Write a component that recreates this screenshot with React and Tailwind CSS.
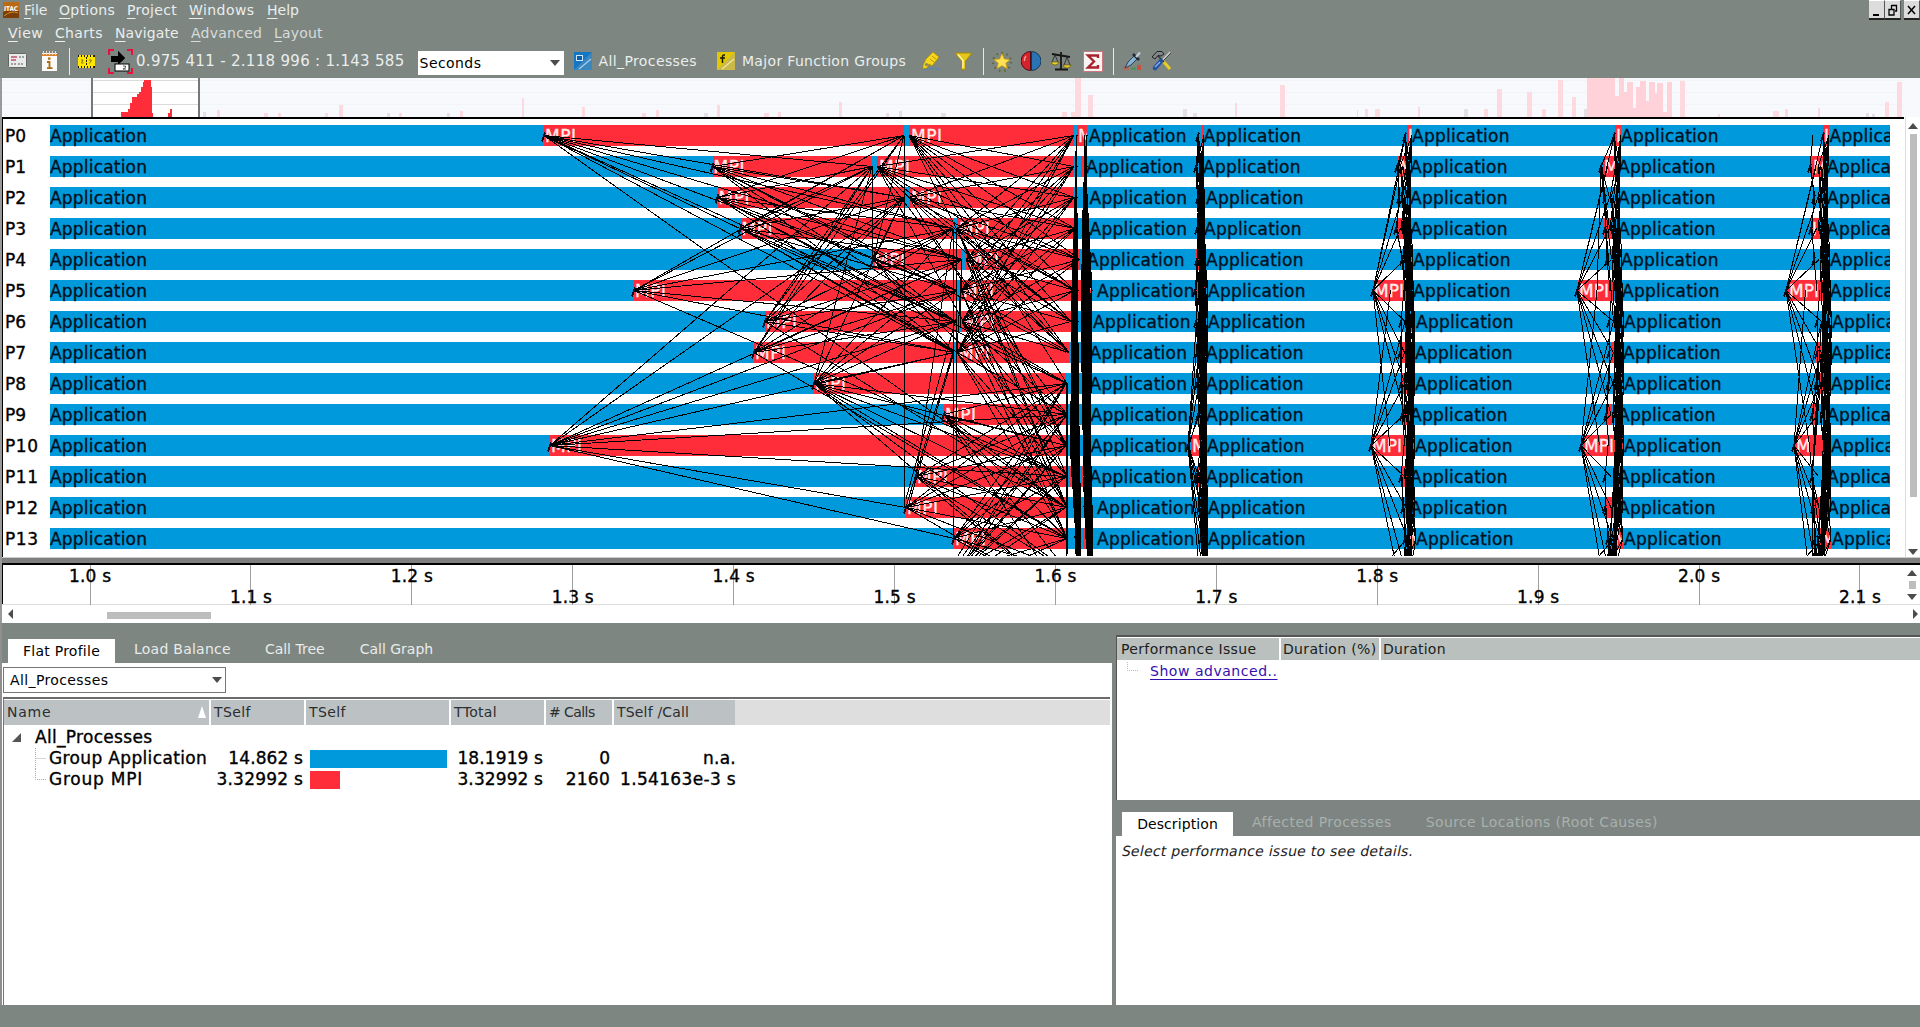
import React, { useLayoutEffect, useRef } from "react";

const BLUE = "#0099dc";
const RED = "#ff2d3a";
const FONT = '"DejaVu Sans", sans-serif';

/* Text stretched by letter spacing to a fixed run width. */
function Fit({ w, className = "", children }) {
  const ref = useRef(null);
  useLayoutEffect(() => {
    const el = ref.current;
    el.style.letterSpacing = "0px";
    const n = el.textContent.length;
    const natural = el.offsetWidth;
    el.style.letterSpacing = (w - natural) / n + "px";
  }, [w]);
  return (
    <span ref={ref} className={"inline-block whitespace-pre leading-none " + className}>
      {children}
    </span>
  );
}

/* ---------- timeline data ---------- */
const rowTop = (k) => 6 + 31 * k;
const rowMid = (k) => 16.5 + 31 * k;
const ROWS = Array.from({ length: 14 }, (_, i) => i);

const s1 = [544, 712.5, 717.5, 740.5, 873, 634, 765, 754, 814, 944, 550, 916, 906, 954, 960, 930];
const e1 = [904, 872, 904, 953, 962, 957, 955, 954];
const s2 = [909, 877, 909, 957, 966, 961, 962, 957];
const e2 = [1074, 1074, 1074, 1075, 1080, 1075, 1071, 1069, 1066, 1067, 1066, 1066, 1066, 1067, 1066, 1066];

const labels = [
  [1089, 1086, 1089.5, 1089.5, 1087, 1097, 1093, 1089.5, 1089.5, 1090.5, 1090.5, 1089.5, 1097, 1097],
  [1203.5, 1203, 1206, 1204, 1206, 1208, 1208, 1206, 1206, 1206, 1207, 1206, 1208, 1208],
  [1412, 1410, 1410, 1410, 1413, 1413, 1416, 1415, 1415, 1410, 1415, 1410, 1410, 1416],
  [1621, 1618, 1618, 1618, 1621, 1622, 1624, 1623, 1624, 1618, 1624, 1618, 1618, 1624],
  [1829.5, 1827, 1827, 1827, 1830, 1830, 1832, 1831, 1831, 1827, 1831, 1827, 1827, 1832],
];

/* [row, x0, x1, label] short MPI stretches of the later iterations */
const shortMpi = [
  [0, 1077, 1087, "M"], [1, 1081, 1085, ""], [5, 1075, 1082, ""], [5, 1085, 1092, "N"],
  [11, 1070, 1074, ""], [11, 1081, 1086, ""], [13, 1083, 1092, ""], [10, 1084, 1088, ""],
  [0, 1202, 1204, ""], [1, 1200, 1204, ""], [5, 1196, 1206, ""], [10, 1191, 1201, "M"],
  [11, 1197, 1204, "I"], [4, 1196, 1200, ""], [8, 1198, 1203, ""],
  [0, 1407, 1412, "I"], [1, 1398, 1407, "M"], [3, 1397, 1406, ""], [5, 1373, 1409, "MPI"],
  [10, 1371, 1414, "MPI"], [13, 1408, 1416, "M"], [7, 1401, 1408, ""], [8, 1401, 1408, ""],
  [9, 1402, 1407, ""], [11, 1402, 1407, ""],
  [0, 1615, 1621, "I"], [1, 1603, 1616, "M"], [3, 1604, 1612, ""], [5, 1578, 1614, "MPI"],
  [10, 1583, 1623, "MPI"], [13, 1613, 1623, "M"], [7, 1611, 1618, ""], [9, 1606, 1612, ""],
  [12, 1606, 1617, ""],
  [0, 1823, 1829, "I"], [1, 1812, 1824, "M"], [3, 1811, 1820, "I"], [5, 1788, 1824, "MPI"],
  [10, 1795, 1830, "M"], [13, 1820, 1831, "M"], [7, 1816, 1822, ""], [9, 1812, 1818, ""],
  [12, 1814, 1824, ""], [8, 1820, 1826, ""],
];

/* senders / receivers of the tight collectives, one x for each process */
const bursts = [
  {
    a: [1076, 1075, 1075, 1074, 1074, 1072, 1071, 1071, 1071, 1071, 1070, 1072, 1074, 1075, 1076, 1077],
    b: [1077, 1077, 1077, 1077, 1077, 1078, 1078, 1078, 1078, 1078, 1079, 1079, 1080, 1081, 1081, 1082],
  },
  {
    a: [1084, 1084, 1083, 1082, 1082, 1081, 1081, 1081, 1082, 1082, 1083, 1083, 1084, 1086, 1088, 1089],
    b: [1087, 1087, 1087, 1087, 1088, 1092, 1091, 1091, 1090, 1090, 1090, 1091, 1092, 1093, 1093, 1094],
  },
  {
    a: [1198, 1196, 1198, 1197, 1197, 1195, 1196, 1197, 1197, 1198, 1188, 1196, 1199, 1201, 1202, 1202],
    b: [1204, 1204, 1205, 1205, 1206, 1208, 1208, 1207, 1207, 1207, 1207, 1207, 1208, 1208, 1208, 1208],
  },
  {
    a: [1405, 1397, 1399, 1396, 1402, 1373, 1401, 1400, 1401, 1402, 1371, 1401, 1403, 1405, 1404, 1405],
    b: [1412, 1410, 1411, 1411, 1413, 1414, 1415, 1415, 1415, 1413, 1415, 1414, 1415, 1416, 1412, 1408],
  },
  {
    a: [1614, 1601, 1605, 1605, 1607, 1577, 1609, 1609, 1608, 1606, 1581, 1605, 1605, 1608, 1607, 1606],
    b: [1621, 1620, 1620, 1620, 1622, 1623, 1624, 1624, 1624, 1622, 1624, 1623, 1623, 1623, 1616, 1613],
  },
  {
    a: [1823, 1810, 1814, 1811, 1814, 1786, 1817, 1817, 1816, 1812, 1794, 1812, 1813, 1815, 1813, 1811],
    b: [1829, 1828, 1828, 1828, 1830, 1831, 1832, 1832, 1831, 1830, 1831, 1831, 1831, 1831, 1825, 1820],
  },
];

function buildMessages() {
  const out = [];
  const add = (x1, r1, x2, r2) => {
    if (x2 - x1 > 3) out.push(`M${x1} ${rowMid(r1)}L${x2} ${rowMid(r2)}`);
  };
  const free = (x1, y1, x2, y2) => out.push(`M${x1} ${y1}L${x2} ${y2}`);
  for (let i = 0; i < 8; i++)
    for (let j = 0; j < 8; j++)
      if (i !== j) {
        add(s1[i], i, e1[j], j);
        add(s2[i], i, e2[j], j);
      }
  // the two groups exchange with each other
  for (let j = 1; j < 8; j++) {
    if (j !== 3) add(s1[10], 10, e1[j], j);
    add(s1[8], 8, e1[j], j);
  }
  add(s1[0], 0, 1066, 12);
  add(s1[0], 0, 1066, 8);
  for (let i = 1; i < 8; i++) add(s1[i], i, 1066, i + 6);
  for (let i = 0; i < 8; i++) {
    add(s2[i], i, 1067, 8 + (i % 6));
    add(s2[i], i, 1067, i % 2 ? 12 : 10);
  }
  for (let i = 8; i < 16; i++)
    for (let j = 8; j < 16; j++) if (i !== j && i !== 10) add(s1[i], i, e2[j], j);
  [[1066, 8], [1066, 9], [1066, 11], [906, 12], [954, 13]].forEach(([x, r]) => add(s1[10], 10, x, r));
  for (let i = 9; i < 14; i += 2) for (let j = 6; j < 8; j++) add(s2[j], j, 1067, i);
  // almost instantaneous messages
  free(904.5, 17, 904.5, 388);
  free(872, 47, 872, 140);
  free(953.5, 110, 953.5, 420);
  free(956.5, 110, 956.5, 340);
  free(962, 140, 960, 210);
  free(962, 140, 957, 233);
  free(953, 233, 906, 388);
  free(954, 233, 908, 388);
  free(956, 200, 906, 380);
  free(953, 110, 916, 357);
  free(1066, 264, 1066, 437);
  free(1068, 264, 1067, 437);
  bursts.forEach(({ a, b }, n) => {
    for (let i = 0; i < 16; i++)
      for (let j = 0; j < 16; j++) {
        const d = Math.abs(i - j);
        if (!d) continue;
        const far = b[i] - a[i] > 18;
        if (n < 2 ? d < 12 : far ? d < 6 : d < 5 || d === 8) {
          const tx = far ? (a[j] + b[j]) / 2 - 3 : b[j];
          free(far ? a[i] : n < 2 ? a[i] : Math.max(a[i], b[i] - 10 + (j % 4)), rowMid(i), tx, rowMid(j));
          if (!far && d === 1) free(a[i], rowMid(i), a[j] + 2 > a[i] + 14 ? a[i] + 3 : a[i] + (a[j] - a[i] < -12 ? 2 : a[j] - a[i]) + 1, rowMid(j));
        }
      }
    if (n > 2) free(b[13] - 9, rowMid(13), b[13] - 24, 437);
  });
  return out.join("");
}
const MESSAGES = buildMessages();

function Bar({ x0, x1, row, fill }) {
  return <rect x={x0} y={rowTop(row)} width={x1 - x0} height="21" fill={fill} />;
}

function Timeline() {
  const dark = { fill: "#00101c", stroke: "#00101c", strokeWidth: 0.35 };
  const light = { fill: "#ffecec", stroke: "#ffecec", strokeWidth: 0.35 };
  return (
    <svg width="1901" height="438" viewBox="3 0 1901 438" className="block shrink-0" shapeRendering="crispEdges" fontFamily={FONT} fontSize="17">
      <defs>
        <clipPath id="plot"><rect x="0" y="0" width="1890" height="437" /></clipPath>
        {shortMpi.map(([r, a, b], i) => (
          <clipPath id={"m" + i} key={i}><rect x={a} y={rowTop(r)} width={b - a} height="21" /></clipPath>
        ))}
      </defs>
      {ROWS.map((r) => (
        <g key={r}>
          <text x="5" y={rowMid(r) + 6} fill="#000" stroke="#000" strokeWidth=".35" textLength={r > 9 ? 33 : 21}>P{r}</text>
          <Bar x0={50} x1={1890} row={r} fill={BLUE} />
          <Bar x0={s1[r]} x1={r < 8 ? e1[r] : e2[r]} row={r} fill={RED} />
          {r < 8 && <Bar x0={s2[r]} x1={e2[r]} row={r} fill={RED} />}
        </g>
      ))}
      {shortMpi.map(([r, a, b], i) => <Bar key={i} x0={a} x1={b} row={r} fill={RED} />)}
      <g clipPath="url(#plot)">
        {ROWS.map((r) => (
          <g key={r}>
            <text x="50" y={rowMid(r) + 6} {...dark} textLength="97">Application</text>
            {labels.map((l, i) => (
              <text key={i} x={l[r]} y={rowMid(r) + 6} {...dark} textLength="97.500">Application</text>
            ))}
            <text x={s1[r] + 1} y={rowMid(r) + 6} {...light} textLength="31">MPI</text>
            {r < 8 && <text x={s2[r] + 2} y={rowMid(r) + 6} {...light} textLength="31">MPI</text>}
          </g>
        ))}
        {shortMpi.map(([r, a, , t], i) =>
          t ? <g key={i} clipPath={`url(#m${i})`}><text x={a + 1} y={rowMid(r) + 6} {...light}>{t}</text></g> : null
        )}
        <path d={MESSAGES} stroke="#000" strokeWidth="1" fill="none" />
        {ROWS.map((r) => (
          <path key={r} stroke="#001020" strokeWidth="2" fill="none"
            d={[s1[r], ...bursts.slice(2).map((c) => c.a[r])].map((x) => `M${x - 2} ${rowMid(r) + 6}l3 -9`).join("")} />
        ))}
      </g>
    </svg>
  );
}

/* ---------- overview strip: [x, width, height] ---------- */
const faint = [
  [203, 3, 5], [217, 3, 7], [264, 4, 4], [278, 3, 4], [325, 3, 4], [339, 4, 12], [387, 3, 4], [399, 3, 4], [447, 3, 4],
  [460, 3, 6], [522, 2, 19], [582, 3, 10], [642, 4, 4], [656, 3, 7], [704, 4, 4], [717, 3, 12], [764, 5, 4], [778, 3, 5],
  [839, 3, 15], [886, 3, 4], [899, 3, 6], [941, 5, 4], [1062, 5, 5], [1071, 4, 5], [1075, 6, 39], [1088, 5, 22],
  [1183, 4, 8], [1193, 4, 4], [1235, 2, 14], [1280, 5, 32], [1357, 1, 7], [1365, 3, 8], [1375, 5, 8], [1418, 2, 10],
  [1464, 4, 8], [1484, 4, 8], [1497, 5, 28], [1527, 5, 25], [1542, 4, 8], [1558, 5, 37], [1572, 4, 20], [1584, 3, 8],
  [1587, 28, 39], [1615, 4, 21], [1619, 5, 39], [1624, 3, 25], [1627, 6, 35], [1633, 3, 9], [1636, 4, 30],
  [1640, 6, 36], [1646, 3, 16], [1649, 6, 35], [1655, 2, 24], [1657, 6, 34], [1663, 4, 5], [1667, 5, 35],
  [1680, 5, 36], [1718, 2, 3], [1773, 6, 6], [1785, 3, 8], [1818, 2, 9], [1866, 3, 4], [1872, 3, 3], [1885, 4, 15], [1897, 5, 35],
];
const grayish = [203, 387, 447, 704, 886, 899, 941, 1183, 1193, 1357, 1464, 1584, 1866, 1872];

function Overview() {
  return (
    <svg width="1918" height="39" viewBox="2 0 1918 39" className="block" shapeRendering="crispEdges">
      <rect x="2" width="1918" height="39" fill="#f8f9fd" />
      <path d="M2 2.5H1904M2 14.5H1904M2 26.5H1904" stroke="#f3f4f8" />
      {faint.map(([x, w, h], i) => <rect key={i} x={x} y={39 - h} width={w} height={h} fill={grayish.includes(x) ? "#e6e0e6" : x > 1586 && x < 1672 ? "#ffd2d9" : "#fdd9e0"} />)}
      <rect x="92" width="107" height="39" fill="#fff" />
      <path d="M92 2.5H199M92 14.5H199M92 26.5H199" stroke="#dadada" />
      <path d="M121 39V34H128V31H130V25H132V19H137V16H139V14H141V9H143V4H144V2H151V9H152V35H153V39ZM168 39V35H170V31H172V39Z" fill={RED} />
      <path d="M92 0V39M199 0V39" stroke="#777" strokeWidth="2" />
    </svg>
  );
}

/* ---------- time axis ---------- */
function Axis() {
  return (
    <svg width="1901" height="40" viewBox="3 0 1901 40" className="block shrink-0" fontFamily={FONT} fontSize="17">
      {Array.from({ length: 12 }, (_, k) => {
        const x = 89.5 + 160.9 * k;
        return (
          <g key={k}>
            <path d={`M${Math.round(x) + 0.5} 0V40`} stroke="#a0a0a0" />
            <text x={x - 20.5} y={k % 2 ? 38 : 17} textLength="42" fill="#000" stroke="#000" strokeWidth=".35">{(1 + k / 10).toFixed(1)} s</text>
          </g>
        );
      })}
    </svg>
  );
}

function Tri({ dir, className = "" }) {
  const d = { up: "M0 6L5 0L10 6Z", down: "M0 0H10L5 6Z", left: "M5 0V10L0 5Z", right: "M0 0V10L5 5Z" }[dir];
  const v = dir === "up" || dir === "down";
  return <svg width={v ? 10 : 5} height={v ? 6 : 10} className={"block shrink-0 " + className}><path d={d} fill="#4c4c4c" /></svg>;
}

/* ---------- toolbar icons ---------- */
const IconCard = () => (
  <svg width="20" height="18" className="block"><rect x=".5" y="1.5" width="18" height="14" rx="1" fill="#e9eaea" stroke="#666" /><path d="M3 5H9M3 8H8" stroke="#c05068" strokeWidth="1.3" /><path d="M11 5H16M3 12H8M10 12H16" stroke="#888" strokeWidth="1.5" strokeDasharray="2 1" /></svg>
);
const IconInfo = () => (
  <svg width="17" height="21" className="block"><rect x="1" y="2" width="15" height="18" fill="#fafafa" /><rect x="1" y="3" width="15" height="2" fill="#d9822b" /><path d="M2.5 0V4M5.5 0V4M8.5 0V4M11.5 0V4M14.5 0V4" stroke="#f0d8c0" /><path d="M6 11H8.500V17M6 17.200H11.500" stroke="#b06a10" strokeWidth="1.800" fill="none" /><rect x="7" y="6.500" width="2.500" height="2.200" fill="#b06a10" /></svg>
);
const IconFilm = () => (
  <svg width="17" height="13" className="block"><rect width="17" height="13" fill="#1c1a00" /><rect x="0" y="2" width="17" height="9" fill="#ffe600" /><path d="M1 1H16M1 12H16" stroke="#ffe600" strokeWidth="2" strokeDasharray="2 1" /><path d="M8.500 2V11" stroke="#1c1a00" strokeDasharray="2 1" /><path d="M3 5H5L3.500 8H5.500M11 5H13.500L11.500 8.500" stroke="#8a7600" fill="none" /></svg>
);
const IconGoto = () => (
  <svg width="25" height="25" className="block"><path d="M1 6V1H6M19 1H24V6M1 19V24H6M19 24H24V19" fill="none" stroke="#e8103c" strokeWidth="2" /><path d="M3 7H10V2L17 9L10 16V12H3Z" fill="#000" /><rect x="7" y="15" width="14" height="7" fill="#fff" stroke="#000" /><path d="M3 7H10V2L17 9L13 13H3Z" fill="#000" /><path d="M15 17H17.500V18.500L15 20H18" stroke="#333" fill="none" strokeWidth=".8" /></svg>
);
const IconProc = () => (
  <svg width="18" height="18" className="block"><rect width="18" height="18" fill="#1577c4" /><path d="M0 18L18 0V18Z" fill="#3a86bf" /><path d="M5 17L17 7" stroke="#a8cce6" strokeWidth="1.300" /><rect x="2.500" y="3.500" width="6" height="5" fill="#0b5ea8" stroke="#cfe8fa" /></svg>
);
const IconFn = () => (
  <svg width="18" height="18" className="block"><rect width="18" height="18" fill="#e2c800" /><path d="M0 18L18 0V18Z" fill="#cbb84a" /><path d="M5 17L17 7" stroke="#f0e6a0" strokeWidth="1.300" /><path d="M8 3H6.500Q5.500 3 5.500 5V11M3 6H8" stroke="#1a1600" strokeWidth="1.500" fill="none" /></svg>
);
const IconTag = () => (
  <svg width="22" height="21" className="block"><path d="M2 19Q11 16 20 19" stroke="#4f88bd" strokeWidth="1.500" fill="none" strokeDasharray="5 1" /><path d="M12 1L18 6L11 15L8 13L6 17L2 18L2 14L5 8Z" fill="#f7d51c" stroke="#a98a00" strokeWidth=".8" /><circle cx="5.500" cy="13.500" r="1.600" fill="#7e8682" /><path d="M9 8L13 11M11 5L15 8" stroke="#b89600" /></svg>
);
const IconFunnel = () => (
  <svg width="19" height="19" className="block"><path d="M1 1H18L11.500 9V17L7.500 18V9Z" fill="#e6c61c" stroke="#a88c00" /><path d="M4 2.500L9 8.500V16" stroke="#fff6a0" strokeWidth="1.500" fill="none" /></svg>
);
const IconStar = () => (
  <svg width="22" height="21" className="block"><circle cx="11" cy="11" r="9" fill="none" stroke="#58652e" strokeWidth="2" strokeDasharray="1.500 3.700" /><path d="M11 2.500L13.300 8L19 8.500L14.800 12.200L16.200 17.500L11 14.800L5.800 17.500L7.200 12.200L3 8.500L8.700 8Z" fill="#ffe052" stroke="#c79b00" strokeWidth=".7" /></svg>
);
const IconHalf = () => (
  <svg width="20" height="20" className="block"><path d="M9.500 .5A9.300 9.300 0 0 0 9.500 19.500Z" fill="#d6222a" stroke="#4b1013" /><path d="M10.500 .5A9.300 9.300 0 0 1 10.500 19.500Z" fill="#2a74b4" stroke="#16395a" /><path d="M5 5Q3 7 3.500 10" stroke="#ff9a9a" strokeWidth="1.500" fill="none" /></svg>
);
const IconScale = () => (
  <svg width="21" height="20" className="block"><path d="M1 3L19 6M10 1V18M4 18.500H17" stroke="#161616" strokeWidth="1.800" fill="none" /><path d="M4 4L1 11M4 4L7 11M16 6L13 14M16 6L19 14" stroke="#222" strokeWidth=".8" /><path d="M0 11H8Q7 14 4 14T0 11ZM12 14H20Q19 17 16 17T12 14Z" fill="#e7cf2a" stroke="#5a4e00" strokeWidth=".6" /></svg>
);
const IconSigma = () => (
  <svg width="20" height="21" className="block"><rect x=".5" y=".5" width="19" height="20" fill="#f8f4f4" stroke="#c8787e" /><path d="M15 7V4.500H5L11 10.500L5 16.500H15V14" fill="none" stroke="#a8232e" strokeWidth="2.400" /></svg>
);
const IconDrop = () => (
  <svg width="21" height="21" className="block"><rect x="1" y="15" width="6" height="4" fill="#c8604c" opacity=".7" /><rect x="9" y="16" width="5" height="3" fill="#4d9460" /><rect x="15" y="14" width="4" height="5" fill="#c8503f" /><path d="M3 17L6 11L12 5L15 8L9 14Z" fill="#86b3d2" stroke="#2b4258" /><path d="M11 3L17 9" stroke="#1d2a38" strokeWidth="2.500" /><path d="M14 6L18 1.500" stroke="#bfc9ce" strokeWidth="2.500" /></svg>
);
const IconTools = () => (
  <svg width="23" height="22" className="block"><path d="M13 11L20 19" stroke="#e6cf1e" strokeWidth="3" /><path d="M6 4L14 12" stroke="#333" strokeWidth="1.500" /><path d="M20 2L11 12" stroke="#ccc" strokeWidth="1.500" /><path d="M21 3L12 12" stroke="#444" strokeWidth="1" /><path d="M11 11L5 18" stroke="#24519f" strokeWidth="4.500" strokeLinecap="round" /><path d="M10 12L5 17" stroke="#8db8f0" strokeWidth="1.300" /><path d="M2 7L7 1.500H12L14 4L11 6L8 5.500L5 9Z" fill="#80868a" stroke="#222" /></svg>
);

const Menu = ({ items }) =>
  items.map(([t, ml, w]) => (
    <span key={t} className="flex" style={{ marginLeft: ml, width: w }}>
      <Fit w={w} className="text-[14px]"><span className="underline underline-offset-[3px]">{t[0]}</span>{t.slice(1)}</Fit>
    </span>
  ));

const Sep = ({ className }) => <div className={"h-[27px] w-px bg-[#e8e8e8] " + className} />;

function Header() {
  return (
    <header className="h-[78px] bg-[#7e8682] pl-[2px] text-[#eaeeec]">
      <div className="flex h-[22px] items-start">
        <div className="flex grow items-center pt-[2px]">
          <svg width="16" height="16" className="ml-px block"><rect width="16" height="16" fill="#7a3d08" /><path d="M0 10Q8 6 16 9V0H0Z" fill="#b86a14" /><path d="M1 14Q8 8 15 11" stroke="#d88a28" fill="none" /><text x="1" y="8.500" fontSize="6.500" fontWeight="bold" fill="#fff" fontFamily={FONT} textLength="14" lengthAdjust="spacingAndGlyphs">ITAC</text></svg>
          <Menu items={[["File", 5, 23], ["Options", 12, 56], ["Project", 12, 50], ["Windows", 12, 66], ["Help", 12, 32]]} />
        </div>
        <div className="flex text-black">
          <WinBtn><path d="M4 14H10" stroke="#000" strokeWidth="2" /></WinBtn>
          <WinBtn><path d="M6.500 4.500H11.500V10H10M6.500 4V8M4 8.500H9V14H4Z" fill="none" stroke="#000" strokeWidth="1.300" /></WinBtn>
          <div className="w-[3px]" />
          <WinBtn><path d="M4 5L11 13M11 5L4 13" stroke="#000" strokeWidth="1.500" /></WinBtn>
        </div>
      </div>
      <div className="flex h-[22px] items-center">
        <Menu items={[["View", 6, 35], ["Charts", 12, 48], ["Navigate", 12, 64]]} />
        <span className="flex text-[#d6dcd9]"><Menu items={[["Advanced", 12, 71], ["Layout", 12, 49]]} /></span>
      </div>
      <div className="flex h-[34px] items-center">
        <div className="ml-[6px]"><IconCard /></div>
        <div className="ml-[13px]"><IconInfo /></div>
        <Sep className="ml-[11px]" />
        <div className="ml-[8px]"><IconFilm /></div>
        <div className="ml-[13px]"><IconGoto /></div>
        <Fit w={269} className="ml-[3px] text-[15px]">0.975 411 - 2.118 996 : 1.143 585</Fit>
        <div className="ml-[13px] mt-[3px] flex h-[24px] w-[146px] items-center justify-between bg-white pl-[2px] pr-[4px] text-black">
          <Fit w={62} className="text-[14px]">Seconds</Fit>
          <Tri dir="down" />
        </div>
        <div className="ml-[10px]"><IconProc /></div>
        <Fit w={98} className="ml-[7px] text-[14px]">All_Processes</Fit>
        <div className="ml-[20px]"><IconFn /></div>
        <Fit w={164} className="ml-[7px] text-[14px]">Major Function Groups</Fit>
        <div className="ml-[15px]"><IconTag /></div>
        <div className="ml-[11px]"><IconFunnel /></div>
        <Sep className="ml-[10px]" />
        <div className="ml-[7px]"><IconStar /></div>
        <div className="ml-[8px]"><IconHalf /></div>
        <div className="ml-[10px]"><IconScale /></div>
        <div className="ml-[11px]"><IconSigma /></div>
        <Sep className="ml-[10px]" />
        <div className="ml-[8px]"><IconDrop /></div>
        <div className="ml-[7px]"><IconTools /></div>
      </div>
    </header>
  );
}

const WinBtn = ({ children }) => (
  <div className="h-[20px] w-[16px] border-b-2 border-r border-b-[#222] border-r-[#555] border-t border-t-white bg-[#dcdcdc]">
    <svg width="15" height="17" className="block">{children}</svg>
  </div>
);

const TH = ({ w, t, tw, arrow }) => (
  <div className="mr-[2px] flex h-full shrink-0 items-center justify-between bg-[#bcc1c3] pb-[2px] pl-[3px] text-[#2a2e30]" style={{ width: w }}>
    <Fit w={tw} className="text-[14px]">{t}</Fit>
    {arrow && <svg width="8" height="12" className="mr-[3px] block"><path d="M4 0L8 12H0Z" fill="#fff" /></svg>}
  </div>
);

const STRONG = "text-[17px] [-webkit-text-stroke:0.35px_#000]";

const Num = ({ w, tw, children }) => (
  <div className="flex shrink-0 justify-end" style={{ width: w }}><Fit w={tw} className={STRONG}>{children}</Fit></div>
);

function DataRow({ name, nw, last, a, aw, bar, color, b, bw, c, cw, d, dw }) {
  return (
    <div className="flex h-[21px] items-center">
      <svg width="42" height="21" className="block shrink-0"><path d={last ? "M31.500 0V10.500H42" : "M31.500 0V21M31.500 10.500H42"} stroke="#aaa" strokeDasharray="1 1" fill="none" /></svg>
      <div className="w-[162px] shrink-0 pl-[3px]"><Fit w={nw} className={STRONG}>{name}</Fit></div>
      <Num w={95} tw={aw}>{a}</Num>
      <div className="ml-[7px] h-[18px] shrink-0" style={{ width: bar, background: color }} />
      <div className="shrink-0" style={{ width: 145 - bar }} />
      <Num w={88} tw={bw}>{b}</Num>
      <Num w={67} tw={cw}>{c}</Num>
      <Num w={126} tw={dw}>{d}</Num>
    </div>
  );
}

function LeftPane() {
  return (
    <section className="flex w-[1110px] shrink-0 flex-col">
      <div className="flex h-[40px] items-end text-[14px] text-[#e8ecea]">
        <div className="ml-[6px] flex h-[24px] w-[107px] items-center justify-center bg-white text-black"><Fit w={77}>Flat Profile</Fit></div>
        <div className="flex h-[29px] items-center">
          <Fit w={97} className="ml-[19px]">Load Balance</Fit>
          <Fit w={60} className="ml-[34px]">Call Tree</Fit>
          <Fit w={74} className="ml-[35px]">Call Graph</Fit>
        </div>
      </div>
      <div className="flex h-[342px] flex-col bg-white pl-px">
        <div className="mt-[4px] flex h-[26px] w-[223px] items-center justify-between border border-[#777] pl-[6px] pr-[3px] text-black">
          <Fit w={98} className="text-[14px]">All_Processes</Fit>
          <Tri dir="down" />
        </div>
        <div className="mr-[2px] mt-[4px] grow border-l border-t-2 border-l-[#777] border-t-[#6b6b6b] text-black">
          <div className="mt-px flex h-[25px] bg-white">
            <TH w={205} t="Name" tw={44} arrow />
            <TH w={93} t="TSelf" tw={37} />
            <TH w={143} t="TSelf" tw={37} />
            <TH w={93} t="TTotal" tw={43} />
            <TH w={66} t="# Calls" tw={46} />
            <TH w={121} t="TSelf /Call" tw={72} />
            <div className="-ml-[2px] grow bg-[#dedede]" />
          </div>
          <div className="flex h-[23px] items-center pt-px">
            <svg width="9" height="9" className="ml-[8px] block"><path d="M9 0V9H0Z" fill="#555" /></svg>
            <Fit w={117} className={"ml-[14px] " + STRONG}>All_Processes</Fit>
          </div>
          <DataRow name="Group Application" nw={158} a="14.862 s" aw={75} bar={137} color={BLUE} b="18.1919 s" bw={86} c="0" cw={11} d="n.a." dw={33} />
          <DataRow name="Group MPI" nw={94} last a="3.32992 s" aw={87} bar={30} color={RED} b="3.32992 s" bw={86} c="2160" cw={44} d="1.54163e-3 s" dw={116} />
        </div>
      </div>
    </section>
  );
}

function RightPane() {
  return (
    <section className="flex grow flex-col pl-[4px]">
      <div className="mt-[12px] h-[165px] border-l border-t-2 border-l-[#555] border-t-[#555] bg-white pt-px">
        <div className="flex h-[22px] text-[14px] text-[#1c2020]">
          <div className="mr-[2px] flex w-[162px] items-center bg-[#b9c0bd] pl-[4px]"><Fit w={135}>Performance Issue</Fit></div>
          <div className="mr-[2px] flex w-[98px] items-center bg-[#b9c0bd] pl-[2px]"><Fit w={93}>Duration (%)</Fit></div>
          <div className="flex grow items-center bg-[#b9c0bd] pl-[2px]"><Fit w={63}>Duration</Fit></div>
        </div>
        <div className="flex h-[21px] items-center">
          <svg width="33" height="21" className="block"><path d="M10.500 2V10.500H21" stroke="#bbb" strokeDasharray="1 1" fill="none" /></svg>
          <Fit w={128} className="text-[14px] text-[#3410b0] underline underline-offset-[3px]">Show advanced..</Fit>
        </div>
      </div>
      <div className="flex h-[36px] items-end bg-[#7e8482] text-[14px] text-[#a7b1ac]">
        <div className="ml-[6px] flex h-[24px] w-[111px] items-center justify-center bg-white text-black"><Fit w={81}>Description</Fit></div>
        <div className="flex h-[28px] items-center">
          <Fit w={140} className="ml-[19px]">Affected Processes</Fit>
          <Fit w={232} className="ml-[34px]">Source Locations (Root Causes)</Fit>
        </div>
      </div>
      <div className="h-[169px] bg-white pl-[6px] pt-[5px] text-[14px] text-[#222]"><Fit w={292} className="-skew-x-12">Select performance issue to see details.</Fit></div>
    </section>
  );
}

export default function App() {
  return (
    <div className="h-[1027px] w-[1920px] overflow-hidden bg-[#7e8682] font-['DejaVu_Sans',sans-serif]">
      <Header />
      <div className="border-l-2 border-[#999] bg-white">
        <Overview />
        <div className="flex">
          <div className="w-[1902px] border-l border-t-2 border-l-black border-t-black"><Timeline /></div>
          <div className="ml-px flex h-[440px] grow flex-col items-center border-l border-[#ddd] pt-[6px]">
            <Tri dir="up" />
            <div className="mt-[5px] h-[363px] w-[7px] bg-[#bdbdbd]" />
            <Tri dir="down" className="mt-[52px]" />
          </div>
        </div>
        <div className="h-[6px] border-t border-t-[#ccc] bg-[#7f7f7f]" />
        <div className="h-[2px] bg-black" />
        <div className="flex h-[40px] border-b border-[#ddd]">
          <div className="border-l border-black"><Axis /></div>
          <div className="flex grow flex-col items-center pt-[5px]">
            <Tri dir="up" />
            <div className="mt-[5px] h-[8px] w-[7px] bg-[#bdbdbd]" />
            <Tri dir="down" className="mt-[5px]" />
          </div>
        </div>
        <div className="flex h-[18px] items-center">
          <Tri dir="left" className="ml-[6px]" />
          <div className="ml-[94px] mt-[2px] h-[7px] w-[104px] bg-[#bdbdbd]" />
          <div className="grow" />
          <Tri dir="right" className="mr-[2px]" />
        </div>
      </div>
      <div className="flex h-[382px] border-l-2 border-[#8f8f8f]">
        <LeftPane />
        <RightPane />
      </div>
    </div>
  );
}
